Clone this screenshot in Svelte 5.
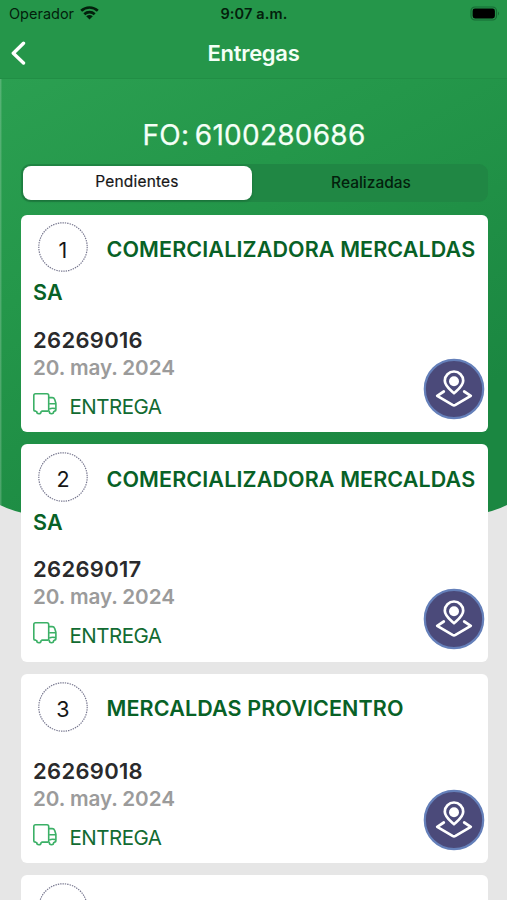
<script>
  const deliveries = [
    { position: 1, client: 'COMERCIALIZADORA MERCALDAS SA', order: '26269016', date: '20. may. 2024' },
    { position: 2, client: 'COMERCIALIZADORA MERCALDAS SA', order: '26269017', date: '20. may. 2024' },
    { position: 3, client: 'MERCALDAS PROVICENTRO', order: '26269018', date: '20. may. 2024' },
    { position: '', client: '', order: '', date: '' }
  ];
  let tab = $state('pending');
</script>

<div class="screen">
  <svg class="backdrop" width="507" height="520" viewBox="0 0 507 520" aria-hidden="true">
    <defs>
      <linearGradient id="green" x1="0" y1="80" x2="240" y2="520" gradientUnits="userSpaceOnUse">
        <stop offset="0" stop-color="#2b9f51" />
        <stop offset="0.4" stop-color="#24974a" />
        <stop offset="1" stop-color="#1b8741" />
      </linearGradient>
    </defs>
    <path d="M0 0H507V505Q490 513.500 466 516H41Q17 513.500 0 505Z" fill="url(#green)" />
    <path d="M0.700 79V505" stroke="#fff" stroke-opacity=".2" stroke-width="1.500" />
  </svg>

  <header>
    <div class="status">
      <div class="carrier">
        <span>Operador</span>
        <svg width="19" height="14" viewBox="0 0 19 14" fill="none" stroke="#03200c" stroke-width="2.700">
          <path d="M1.200 4.800C6 .4 13 .4 17.800 4.800" />
          <path d="M4.300 8.200C7.300 5.400 11.700 5.400 14.700 8.200" />
          <path d="M6.200 10.300Q9.500 7.700 12.800 10.300L9.500 13.500Z" fill="#03200c" stroke="none" />
        </svg>
      </div>
      <b>9:07 a.m.</b>
      <svg class="battery" width="31" height="15" viewBox="0 0 31 15">
        <rect x="1" y="1" width="25.500" height="13" rx="4" fill="none" stroke="#176b34" stroke-width="1.200" />
        <rect x="2.600" y="2.600" width="22.300" height="9.800" rx="2.400" fill="#000" />
        <path d="M28 5.500Q30 7.500 28 9.500Z" fill="#176b34" />
      </svg>
    </div>
    <div class="nav">
      <svg class="back" width="16" height="25" viewBox="0 0 16 25" fill="none" stroke="#fff" stroke-width="3.400" stroke-linecap="round" stroke-linejoin="round">
        <path d="M12.500 2.300L2.300 12.300L12.500 22" />
      </svg>
      <h1>Entregas</h1>
    </div>
  </header>

  <main>
    <h2>FO: 6100280686</h2>
    <div class="tabs">
      <button class:active={tab === 'pending'} onclick={() => (tab = 'pending')}>Pendientes</button>
      <button class:active={tab === 'done'} onclick={() => (tab = 'done')}>Realizadas</button>
    </div>
    <div class="list">
      {#each deliveries as item}
        <article>
          <h3>
            <span class="num">
              <svg width="50" height="50" viewBox="0 0 50 50"><circle cx="25" cy="25" r="24.200" fill="none" stroke="#77778f" stroke-width="1.200" stroke-dasharray="1.400 1" /></svg>
              <i>{item.position}</i>
            </span>{item.client}
          </h3>
          {#if item.order}
            <p class="order">{item.order}</p>
            <p class="date">{item.date}</p>
            <div class="kind">
              <svg width="24" height="22" viewBox="0 0 24 22" fill="none" stroke="#3bb066" stroke-width="1.600" stroke-linejoin="round">
                <path d="M3.300 18.100H2.500Q.8 18.100 .8 16.400V2.500Q.8 .8 2.500 .8H14Q15.700 .8 15.700 2.500V18.100M8.300 18.100H15.700" />
                <path d="M15.700 4.600H19.200Q21 4.600 21.700 6.500L22.900 10.200V16.400Q22.900 18.100 21.200 18.100H20.800M16.200 10.800H22.700" />
                <path d="M3.600 18.100Q3.600 20.800 5.900 20.800T8.200 18.100M16.200 18.100Q16.200 20.800 18.500 20.800T20.800 18.100M16.200 16.200Q18.500 14.600 22.700 15.600" />
              </svg>
              <span>ENTREGA</span>
            </div>
            <button class="map" aria-label="Mapa">
              <svg width="62" height="62" viewBox="0 0 62 62" fill="none" stroke="#fff" stroke-width="2.700" stroke-linejoin="round" stroke-linecap="round">
                <circle cx="31" cy="31" r="29.200" fill="#4b4a7a" stroke="#6580ba" stroke-width="2.200" />
                <path d="M31 35.200C27.500 32 21.800 28 21.800 22.700A9.200 9.200 0 0 1 40.200 22.700C40.200 28 34.500 32 31 35.200Z" />
                <circle cx="31" cy="23.200" r="5" fill="#fff" stroke="none" />
                <path d="M20.800 33.500L14.200 37.800L29.500 46.900Q31 47.700 32.500 46.900L47.800 37.800L41.200 33.500" />
              </svg>
            </button>
          {/if}
        </article>
      {/each}
    </div>
  </main>
</div>

<style>
  :global(body) { margin: 0; }
  .screen {
    position: relative;
    width: 507px;
    height: 900px;
    overflow: hidden;
    background: #e6e6e6;
    font-family: Inter, 'Liberation Sans', sans-serif;
    box-sizing: border-box;
  }
  .backdrop { position: absolute; top: 0; left: 0; display: block; }
  header { position: relative; height: 79px; background: #25964a; box-shadow: inset 0 -1px #218e45; }
  svg { display: block; flex: none; }
  .status { height: 27px; display: grid; grid-template-columns: 1fr auto 1fr; align-items: center; padding: 0 6px 0 9px; color: #03200c; font-size: 14.500px; }
  .carrier { display: flex; align-items: center; gap: 6px; }
  .carrier svg { margin-top: -1px; }
  .status b { font-weight: 600; letter-spacing: 0.150px; position: relative; left: -1px; }
  .battery { justify-self: end; margin-top: -1px; }
  .nav { height: 52px; display: grid; grid-template-columns: 1fr auto 1fr; align-items: center; padding: 0 11px; }
  h1, h2, h3, p { margin: 0; }
  h1 { color: #f4fff6; font-size: 22px; line-height: 28px; font-weight: 600; letter-spacing: -0.300px; margin-top: -1px; }
  main { position: relative; padding: 0 19.500px 0 20.500px; }
  h2 { height: 85px; padding-top: 38px; box-sizing: border-box; text-align: center; color: #f5fff7; font-size: 28px; line-height: 36px; font-weight: 400; letter-spacing: 0.250px; word-spacing: -2.500px; -webkit-text-stroke: 0.250px #f5fff7; }
  .tabs { display: flex; gap: 2px; height: 38px; margin-bottom: 1px; box-sizing: border-box; padding: 2px 3px 2px 2px; border-radius: 9px; background: #208744; }
  .tabs button { flex: 1; padding: 0 0 1px; border: 0; border-radius: 8px; background: none; color: #03200c; font: 500 15.500px/32px Inter, sans-serif; letter-spacing: 0; }
  .tabs button:last-child { padding-left: 4px; }
  .tabs button.active { flex: 0 0 229px; padding-bottom: 2px; background: #fff; color: #161616; font-weight: 400; box-shadow: 0 1px 3px #0003; -webkit-text-stroke: 0.200px #161616; letter-spacing: 0.180px; }
  .list { display: flex; flex-direction: column; gap: 12px; padding-top: 11.500px; }
  article { position: relative; box-sizing: border-box; padding: 7px 0 0 12.500px; background: #fff; border-radius: 6px; height: 217.700px; flex: none; }
  article:nth-child(n + 3) { height: 189.500px; }
  h3 { font-size: 21.500px; line-height: 41px; font-weight: 600; color: #086126; letter-spacing: 0.120px; padding-top: 7.500px; height: 93px; box-sizing: border-box; }
  article:nth-child(n + 3) h3 { height: 65px; }
  .num { display: inline-grid; place-items: center; width: 50px; height: 50px; margin: -4px 18.500px -4px 5px; vertical-align: middle; position: relative; top: -4px; }
  .num > * { grid-area: 1 / 1; }
  .num i { font-style: normal; font-weight: 400; color: #161616; line-height: 24px; padding-top: 5px; }
  .order { margin-top: 12px; color: #2a2a2c; font-weight: 600; font-size: 22px; line-height: 27px; letter-spacing: 0.300px; }
  .date { color: #9b9b9b; font-weight: 600; font-size: 20.700px; line-height: 27px; letter-spacing: -0.100px; }
  .kind { display: flex; gap: 12.500px; margin-top: 12px; color: #126b32; font-size: 20.500px; line-height: 27px; font-weight: 400; letter-spacing: -0.500px; }
  .kind svg { margin-top: 0; }
  .map { position: absolute; right: 2.500px; bottom: 12px; padding: 0; border: 0; background: none; }
</style>
